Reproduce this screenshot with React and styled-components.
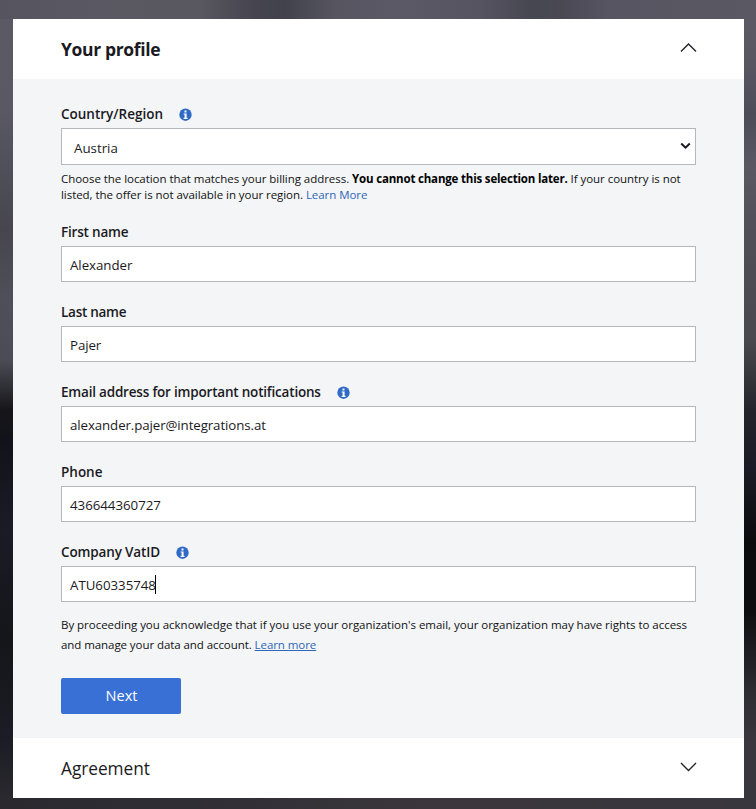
import React from 'react';
import styled, { createGlobalStyle, css } from 'styled-components';

const GlobalStyle = createGlobalStyle`
  *, *::before, *::after { box-sizing: border-box; }
  body {
    margin: 0;
    font-family: 'Open Sans', 'Noto Sans', sans-serif;
    color: #1b1a22;
  }
`;

const Backdrop = styled.main`
  height: 809px;
  padding: 19px 12px 11px 13px;
  overflow: hidden;
  background:
    linear-gradient(90deg, #56555f 0, #5a5862 100px, #59575f 200px, #45444f 255px, #42424d 285px, #565560 335px, #5a5965 400px, #565460 480px, #474752 530px, #494853 560px, #565561 610px, #5a5862 100%) 0 0 / 100% 19px no-repeat,
    linear-gradient(90deg, #2a292e 0, #2f2e34 180px, #39353b 400px, #3a363c 500px, #38373d 100%) 0 100% / 100% 11px no-repeat,
    linear-gradient(#5b5a64 0, #5a5963 110px, #4f4f59 170px, #47464e 230px, #4f4f59 300px, #4c4c56 360px, #16161a 410px, #12121a 440px, #1a1b25 530px, #15161a 640px, #191a20 700px, #1b1c26 740px, #2a292e 798px) 0 0 / 13px 100% no-repeat,
    linear-gradient(#5b5a65 0, #585762 60px, #4c4b58 115px, #595863 165px, #504f59 230px, #49484f 340px, #24242c 410px, #1a1b26 470px, #0b0b0d 540px, #0d0d10 610px, #2d2c31 690px, #39373d 740px, #38373d 809px) 100% 0 / 12px 100% no-repeat,
    #56555f;
`;

const Card = styled.div`
  height: 779px;
  display: flex;
  flex-direction: column;
  background: #fff;
`;

const SectionHeader = styled.header`
  height: 60px;
  flex: none;
  display: flex;
  align-items: center;
  justify-content: space-between;
  padding: 0 47px 0 48px;
  background: #fff;
`;

const SectionTitle = styled.h2`
  margin: 0;
  padding-top: ${({ $active }) => ($active ? 0 : 2)}px;
  font-size: ${({ $active }) => ($active ? '17.5px' : '17.3px')};
  line-height: 24px;
  white-space: nowrap;
  font-weight: ${({ $active }) => ($active ? 700 : 400)};
  letter-spacing: ${({ $active }) => ($active ? '-0.35px' : '-0.05px')};
`;

const Chevron = styled.svg`
  width: 17px;
  height: 10px;
  margin-top: -2px;
  fill: none;
  stroke: #23222f;
  stroke-width: 1.4;
`;

const Body = styled.form`
  flex: 1;
  display: flex;
  flex-direction: column;
  padding: 25px 48px 0;
  background: #f3f5f7;
`;

const Field = styled.div`
  display: flex;
  flex-direction: column;
  margin-bottom: ${({ $gap }) => $gap}px;
`;

const LabelRow = styled.div`
  height: 24px;
  display: flex;
  align-items: flex-start;
  gap: 16px;
`;

const Label = styled.label`
  font-size: 13.5px;
  line-height: 20px;
  font-weight: 600;
  white-space: nowrap;
  letter-spacing: ${({ $track }) => $track || 0}px;
`;

const InfoSvg = styled.svg`
  width: 13px;
  height: 13px;
  margin-top: 4px;
`;

const box = css`
  display: flex;
  align-items: center;
  border: 1px solid #b5b8bb;
  background: #fff;
  font-size: 13.3px;
`;

const Input = styled.div`
  ${box}
  height: 36px;
  padding: 2px 8px 0;
`;

const Select = styled.div`
  ${box}
  height: 37px;
  justify-content: space-between;
  padding: 2px 4px 0 12px;
`;

const SelectArrow = styled.svg`
  width: 11px;
  height: 8px;
  margin-top: -3px;
  fill: none;
  stroke: #1b1a22;
  stroke-width: 2;
`;

const Value = styled.span`
  white-space: nowrap;
  letter-spacing: ${({ $track }) => $track || 0}px;
`;

const Caret = styled.span`
  width: 1px;
  height: 19px;
  margin: -2px 0 0 -1px;
  background: #000;
`;

const Note = styled.p`
  margin: ${({ $top }) => $top}px 0 0;
  font-size: 11.5px;
  line-height: ${({ $line }) => $line}px;
  color: #111;
`;

const Line = styled.span`
  display: block;
  white-space: nowrap;
  letter-spacing: ${({ $track }) => $track || 0}px;
`;

const Strong = styled.strong`
  color: #000;
  font-weight: 700;
  letter-spacing: -0.18px;
`;

const Link = styled.a`
  color: #2f66b8;
  text-decoration: ${({ $underlined }) => ($underlined ? 'underline' : 'none')};
`;

const NextButton = styled.button`
  width: 120px;
  height: 36px;
  margin-top: 23px;
  padding: 0 0 2px 1px;
  border: 0;
  border-radius: 2px;
  background: #3870d6;
  color: #fff;
  font: 400 14.6px/34px 'Open Sans', 'Noto Sans', sans-serif;
`;

function InfoIcon() {
  return (
    <InfoSvg viewBox="0 0 13 13" aria-label="More information">
      <circle cx="6.5" cy="6.7" r="6.2" fill="#2f6bc6" />
      <path d="M5.5 2.6h2v1.9h-2zM4.6 5.4h3v4.4h.9v1.1H4.6V9.8h1V6.5h-1z" fill="#fff" />
    </InfoSvg>
  );
}

function TextField({ label, value, info, caret, labelTrack, valueTrack, gap = 20 }) {
  return (
    <Field $gap={gap}>
      <LabelRow>
        <Label $track={labelTrack}>{label}</Label>
        {info && <InfoIcon />}
      </LabelRow>
      <Input>
        <Value $track={valueTrack}>{value}</Value>
        {caret && <Caret />}
      </Input>
    </Field>
  );
}

export default function App() {
  return (
    <>
      <GlobalStyle />
      <Backdrop>
        <Card>
          <SectionHeader>
            <SectionTitle $active>Your profile</SectionTitle>
            <Chevron viewBox="0 0 17 10"><path d="M1 8.5 8.5 1 16 8.5" /></Chevron>
          </SectionHeader>
          <Body>
            <Field $gap={19}>
              <LabelRow>
                <Label>Country/Region</Label>
                <InfoIcon />
              </LabelRow>
              <Select>
                <Value>Austria</Value>
                <SelectArrow viewBox="0 0 11 8"><path d="M1.2 1.5 5.5 5.7 9.8 1.5" /></SelectArrow>
              </Select>
              <Note $top={6} $line={16}>
                <Line $track={-0.045}>
                  Choose the location that matches your billing address.{' '}
                  <Strong>You cannot change this selection later.</Strong> If your country is not
                </Line>
                <Line $track={-0.05}>
                  listed, the offer is not available in your region. <Link>Learn More</Link>
                </Line>
              </Note>
            </Field>
            <TextField label="First name" labelTrack={-0.2} value="Alexander" valueTrack={-0.05} />
            <TextField label="Last name" labelTrack={-0.27} value="Pajer" valueTrack={-0.1} />
            <TextField
              label="Email address for important notifications"
              labelTrack={-0.2}
              value="alexander.pajer@integrations.at"
              valueTrack={-0.1}
              info
            />
            <TextField label="Phone" value="436644360727" valueTrack={-0.03} />
            <TextField label="Company VatID" labelTrack={-0.14} value="ATU60335748" valueTrack={-0.03} info caret gap={13} />
            <Note $top={0} $line={20}>
              <Line $track={-0.025}>By proceeding you acknowledge that if you use your organization's email, your organization may have rights to access</Line>
              <Line $track={-0.07}>
                and manage your data and account. <Link $underlined>Learn more</Link>
              </Line>
            </Note>
            <NextButton type="button">Next</NextButton>
          </Body>
          <SectionHeader>
            <SectionTitle>Agreement</SectionTitle>
            <Chevron viewBox="0 0 17 10"><path d="M1 1 8.5 8.5 16 1" /></Chevron>
          </SectionHeader>
        </Card>
      </Backdrop>
    </>
  );
}
